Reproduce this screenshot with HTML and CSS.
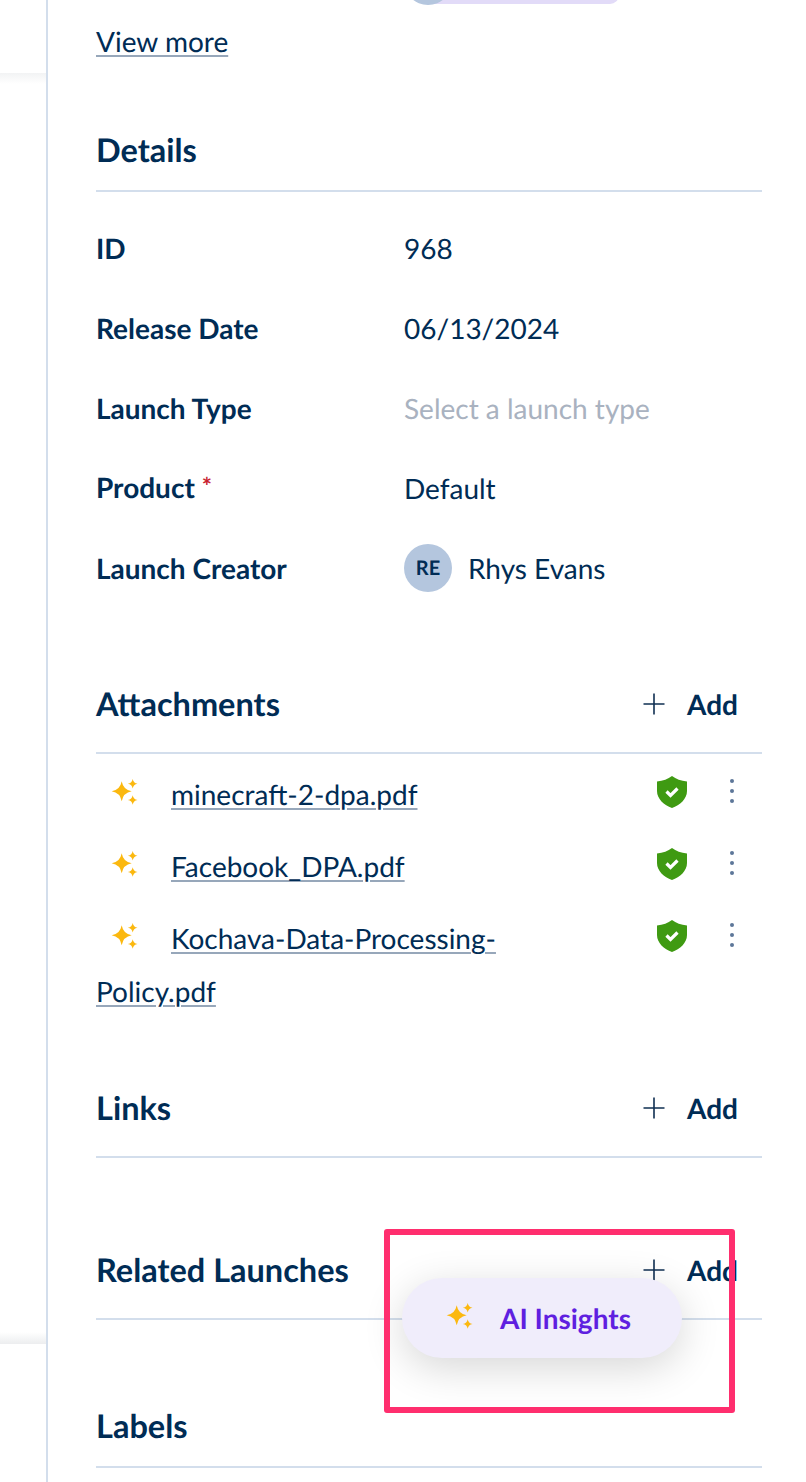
FILE: index.html
```html
<!DOCTYPE html>
<html lang="en">
<head>
<meta charset="utf-8">
<title>Launch details</title>
<link rel="stylesheet" href="styles.css">
</head>
<body>
<svg class="defs" width="0" height="0" aria-hidden="true">
  <defs>
    <symbol id="sparkle" viewBox="0 0 28 28">
      <path d="M10.7 3.3 Q12.2 11.8 20.7 13.3 Q12.2 14.8 10.7 23.3 Q9.2 14.8 0.7 13.3 Q9.2 11.8 10.7 3.3Z"/>
      <path d="M21.7 0.9 Q22.4 5 26.5 5.7 Q22.4 6.4 21.7 10.5 Q21 6.4 16.9 5.7 Q21 5 21.7 0.9Z"/>
      <path d="M21.7 17.2 Q22.4 21.3 26.5 22 Q22.4 22.7 21.7 26.8 Q21 22.7 16.9 22 Q21 21.3 21.7 17.2Z"/>
    </symbol>
    <symbol id="shield" viewBox="0 0 32 34">
      <path d="M16 1 C20 4 25 6 31 6.5 V16 C31 24 24 30 16 33 C8 30 1 24 1 16 V6.5 C7 6 12 4 16 1Z" fill="#3f9a12"/>
      <path d="M10.5 16.5 L14.5 20.5 L21.5 13.5" fill="none" stroke="#fff" stroke-width="3.2"/>
    </symbol>
    <symbol id="plus" viewBox="0 0 22 22">
      <path d="M11 0.5 V21.5 M0.5 11 H21.5" fill="none" stroke="#0f2f52" stroke-width="1.6"/>
    </symbol>
    <symbol id="kebab" viewBox="0 0 4 24">
      <circle cx="2" cy="2" r="2"/><circle cx="2" cy="12" r="2"/><circle cx="2" cy="22" r="2"/>
    </symbol>
  </defs>
</svg>

<div class="page">
  <aside class="left">
    <div class="left-band left-band-top"></div>
    <div class="left-band left-band-bottom"></div>
  </aside>
  <main class="panel">
    <div class="top-chip"><span class="top-avatar"></span></div>
    <a class="link view-more" href="#">View more</a>

    <section class="details">
      <header class="section-head section-head-plain">
        <h2 class="heading">Details</h2>
      </header>
      <dl class="fields">
        <dt class="label">ID</dt><dd class="value">968</dd>
        <dt class="label">Release Date</dt><dd class="value">06/13/2024</dd>
        <dt class="label">Launch Type</dt><dd class="value placeholder">Select a launch type</dd>
        <dt class="label">Product <span class="req">*</span></dt><dd class="value">Default</dd>
        <dt class="label">Launch Creator</dt>
        <dd class="value creator"><span class="avatar">RE</span><span>Rhys Evans</span></dd>
      </dl>
    </section>

    <section class="attachments">
      <header class="section-head">
        <h2 class="heading">Attachments</h2>
        <button class="add"><svg class="plus"><use href="#plus"/></svg>Add</button>
      </header>
      <ul class="files">
        <li class="file">
          <span class="file-actions"><svg class="shield"><use href="#shield"/></svg><svg class="kebab"><use href="#kebab"/></svg></span>
          <svg class="spark"><use href="#sparkle"/></svg><a class="link" href="#">minecraft-2-dpa.pdf</a>
        </li>
        <li class="file">
          <span class="file-actions"><svg class="shield"><use href="#shield"/></svg><svg class="kebab"><use href="#kebab"/></svg></span>
          <svg class="spark"><use href="#sparkle"/></svg><a class="link" href="#">Facebook_DPA.pdf</a>
        </li>
        <li class="file">
          <span class="file-actions"><svg class="shield"><use href="#shield"/></svg><svg class="kebab"><use href="#kebab"/></svg></span>
          <svg class="spark"><use href="#sparkle"/></svg><a class="link" href="#">Kochava-Data-Processing-<br>Policy.pdf</a>
        </li>
      </ul>
    </section>

    <section class="links">
      <header class="section-head">
        <h2 class="heading">Links</h2>
        <button class="add"><svg class="plus"><use href="#plus"/></svg>Add</button>
      </header>
    </section>

    <section class="related">
      <header class="section-head">
        <h2 class="heading">Related Launches</h2>
        <button class="add"><svg class="plus"><use href="#plus"/></svg>Add</button>
      </header>
    </section>

    <section class="labels">
      <header class="section-head section-head-plain">
        <h2 class="heading">Labels</h2>
      </header>
    </section>
  </main>
</div>

<button class="insights"><svg class="insights-spark"><use href="#sparkle"/></svg>AI Insights</button>
<div class="highlight"></div>
</body>
</html>
```
FILE: styles.css
```css
* { box-sizing: border-box; }
html, body { margin: 0; padding: 0; height: 1482px; overflow: hidden; background: #fff; }
body { font-family: Lato, "Open Sans", sans-serif; color: #002c55; position: relative; text-rendering: geometricPrecision; }
.defs { position: absolute; }

.page { display: flex; height: 1482px; }
.left { width: 46px; flex: none; position: relative; }
.left-band { position: absolute; left: 0; right: 0; }
.left-band-top { top: 73px; height: 11px; background: linear-gradient(#f2f3f4, #fff); }
.left-band-bottom { top: 1332px; height: 12px; background: linear-gradient(#fff, #ecedef); }

.panel { width: 716px; flex: none; border-left: 2px solid #d3deec; padding-left: 48px; position: relative; }
.top-chip { position: absolute; left: 375px; top: -14px; width: 196px; height: 18px; border-radius: 9px; background: #e2dbf8; }
.top-avatar { position: absolute; left: -19px; top: -29.5px; width: 48px; height: 48px; border-radius: 50%; background: #b4c6de; }

.link { color: #002c55; text-decoration: underline; text-decoration-color: #97a7ba; text-decoration-thickness: 2px; text-underline-offset: 3px; }
.view-more { display: block; font-size: 28px; line-height: 34px; margin-top: 24px; width: max-content; }

.section-head { display: flex; align-items: center; justify-content: space-between; border-bottom: 2px solid #d3deec; padding-bottom: 29px; }
.section-head-plain { padding-bottom: 21px; }
.heading { margin: 0; font-size: 32.5px; line-height: 38px; font-weight: 700; color: #002c55; }

.add { display: flex; align-items: center; gap: 22px; margin: 0 24px 0 0; padding: 0; border: 0; background: none; font: 700 28px/38px Lato, sans-serif; color: #002c55; text-rendering: geometricPrecision; }
.plus { width: 22px; height: 22px; }

.details { margin-top: 73px; }
.fields { display: grid; grid-template-columns: 308px 1fr; grid-auto-rows: 80px; align-items: center; margin: 16px 0 0; font-size: 28px; line-height: 36px; }
.label { font-weight: 700; }
.value { margin: 0; }
.placeholder { color: #a9b2c0; }
.req { color: #c8202f; font-size: 24px; position: relative; top: -3px; }
.creator { display: flex; align-items: center; gap: 16px; }
.avatar { width: 48px; height: 48px; border-radius: 50%; background: #b4c6de; display: flex; align-items: center; justify-content: center; font-size: 20px; font-weight: 700; line-height: 1; }

.attachments { margin-top: 77px; }
.files { list-style: none; margin: 14px 0 0; padding: 0; font-size: 28px; line-height: 53px; }
.file { margin-bottom: 19px; }
.file-actions { float: right; display: flex; align-items: flex-start; gap: 42px; margin-right: 28px; padding-top: 7px; }
.shield { width: 32px; height: 34px; display: block; }
.kebab { width: 4px; height: 24px; fill: #5d7799; margin-top: 4px; display: block; }
.spark { width: 28px; height: 28px; fill: #fbb80f; margin: 0 32px 0 15px; vertical-align: -1px; }

.links { margin-top: 71px; }
.related { margin-top: 93px; }
.labels { margin-top: 87px; }

.insights { position: absolute; left: 402px; top: 1278px; width: 280px; height: 80px; display: flex; align-items: center; padding: 0 0 0 44px; border: 0; border-radius: 40px; background: #f0edfb; box-shadow: 0 10px 40px rgba(0, 0, 0, 0.16); color: #5f1fe0; font: 700 28px/36px Lato, sans-serif; text-rendering: geometricPrecision; }
.insights-spark { width: 28px; height: 28px; fill: #fbb80f; margin-right: 26px; position: relative; top: -2px; }
.highlight { position: absolute; left: 384px; top: 1229px; width: 351px; height: 184px; border: 6px solid #ff2e6e; border-radius: 3px; pointer-events: none; }
```
